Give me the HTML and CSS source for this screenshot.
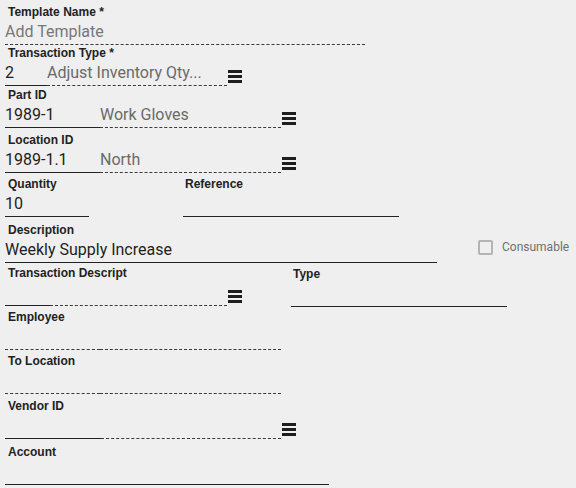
FILE: index.html
```html
<!DOCTYPE html>
<html>
<head>
<meta charset="utf-8">
<link rel="stylesheet" href="styles.css">
</head>
<body>
<form class="form">
  <div class="field">
    <div class="label">Template Name *</div>
    <div class="control">
      <div class="inp dashed placeholder w360">Add Template</div>
    </div>
  </div>

  <div class="field sp41">
    <div class="label">Transaction Type *</div>
    <div class="control">
      <div class="inp solid w42">2</div>
      <div class="inp dashed desc w180">Adjust Inventory Qty...</div>
      <span class="menu"><i></i><i></i><i></i></span>
    </div>
  </div>

  <div class="field sp42">
    <div class="label">Part ID</div>
    <div class="control">
      <div class="inp solid w95">1989-1</div>
      <div class="inp dashed desc w181">Work Gloves</div>
      <span class="menu"><i></i><i></i><i></i></span>
    </div>
  </div>

  <div class="field sp45">
    <div class="label">Location ID</div>
    <div class="control">
      <div class="inp solid w95">1989-1.1</div>
      <div class="inp dashed desc w181">North</div>
      <span class="menu"><i></i><i></i><i></i></span>
    </div>
  </div>

  <div class="row sp44">
    <div class="field">
      <div class="label">Quantity</div>
      <div class="control">
        <div class="inp solid w84">10</div>
      </div>
    </div>
    <div class="field ref">
      <div class="label tight">Reference</div>
      <div class="control">
        <div class="inp solid w216"></div>
      </div>
    </div>
  </div>

  <div class="row sp46">
    <div class="field">
      <div class="label">Description</div>
      <div class="control">
        <div class="inp solid w432">Weekly Supply Increase</div>
      </div>
    </div>
    <label class="check">
      <span class="box"></span>
      <span class="check-text">Consumable</span>
    </label>
  </div>

  <div class="row sp43">
    <div class="field">
      <div class="label">Transaction Descript</div>
      <div class="control">
        <div class="inp solid w45"></div>
        <div class="inp dashed w177"></div>
        <span class="menu"><i></i><i></i><i></i></span>
      </div>
    </div>
    <div class="field type">
      <div class="label tight">Type</div>
      <div class="control">
        <div class="inp solid w216 lower"></div>
      </div>
    </div>
  </div>

  <div class="field sp44">
    <div class="label">Employee</div>
    <div class="control">
      <div class="inp dashed w95"></div>
      <div class="inp dashed w181"></div>
    </div>
  </div>

  <div class="field sp44">
    <div class="label">To Location</div>
    <div class="control">
      <div class="inp dashed w95"></div>
      <div class="inp dashed w181"></div>
    </div>
  </div>

  <div class="field sp45">
    <div class="label">Vendor ID</div>
    <div class="control">
      <div class="inp solid w96"></div>
      <div class="inp dashed w180"></div>
      <span class="menu"><i></i><i></i><i></i></span>
    </div>
  </div>

  <div class="field sp46">
    <div class="label">Account</div>
    <div class="control">
      <div class="inp solid w324"></div>
    </div>
  </div>
</form>
</body>
</html>
```

FILE: styles.css
```css
html, body {
  margin: 0;
  padding: 0;
  background: #efefef;
}

body {
  width: 576px;
  height: 488px;
  overflow: hidden;
}

.form {
  display: flex;
  flex-direction: column;
  padding: 5px 0 0 5px;
  margin: 0;
}

.field {
  display: flex;
  flex-direction: column;
}

.row {
  display: flex;
  align-items: flex-end;
}

.sp41 { margin-top: 1px; }
.sp42 { margin-top: 2px; }
.sp43 { margin-top: 3px; }
.sp44 { margin-top: 4px; }
.sp45 { margin-top: 5px; }
.sp46 { margin-top: 6px; }

.label {
  font-family: "Liberation Sans", Arial, sans-serif;
  font-weight: bold;
  font-size: 12px;
  line-height: 14px;
  color: #222;
  padding-left: 3px;
  margin-bottom: 3px;
  white-space: nowrap;
}

.label.tight {
  padding-left: 2px;
}

.control {
  display: flex;
  align-items: flex-end;
}

.inp {
  box-sizing: content-box;
  height: 19px;
  line-height: 19px;
  padding-bottom: 3px;
  font-family: Roboto, "Liberation Sans", sans-serif;
  font-size: 16px;
  color: #1e1e1e;
  white-space: nowrap;
  overflow: hidden;
}

.solid {
  border-bottom: 1px solid #222;
}

.dashed {
  border-bottom: 1px dashed #3a3a3a;
}

.placeholder {
  color: #777;
}

.desc {
  color: #6a6a6a;
}

.lower {
  margin-bottom: -1px;
}

.w42 { width: 42px; }
.w45 { width: 45px; }
.w84 { width: 84px; }
.w95 { width: 95px; }
.w96 { width: 96px; }
.w177 { width: 177px; }
.w180 { width: 180px; }
.w181 { width: 181px; }
.w216 { width: 216px; }
.w324 { width: 324px; }
.w360 { width: 360px; }
.w432 { width: 432px; }

.menu {
  display: flex;
  flex-direction: column;
  gap: 2px;
  width: 14px;
  margin-left: 1px;
  margin-bottom: 3px;
}

.menu i {
  display: block;
  height: 3px;
  background: #1e1e1e;
}

.ref {
  margin-left: 94px;
}

.type {
  margin-left: 49px;
}

.check {
  display: flex;
  align-items: center;
  margin-left: 41px;
  margin-bottom: 8px;
}

.box {
  box-sizing: border-box;
  width: 15px;
  height: 15px;
  border: 2px solid #b4b4b4;
  border-radius: 2px;
}

.check-text {
  margin-left: 9px;
  font-family: Roboto, "Liberation Sans", sans-serif;
  font-size: 12px;
  line-height: 15px;
  color: #707070;
}
```
